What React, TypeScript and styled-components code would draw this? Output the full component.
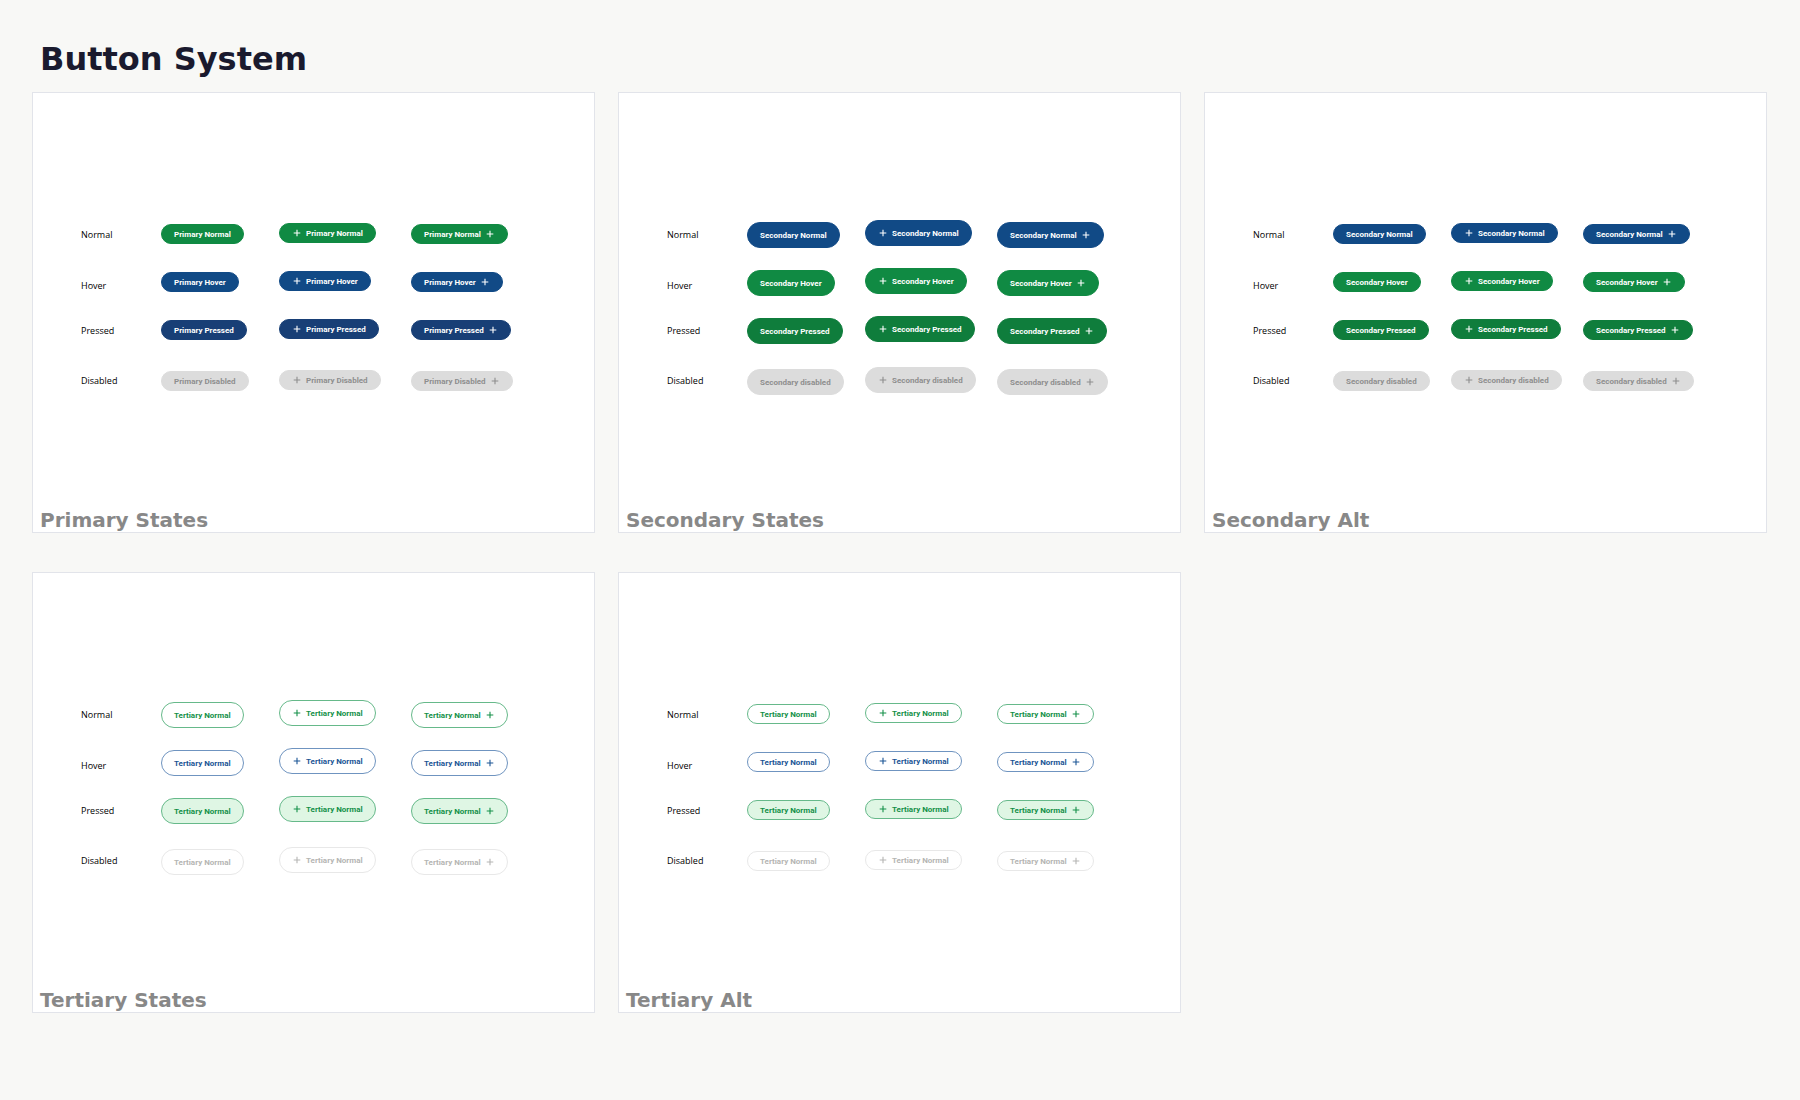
import React from "react";
import styled, { createGlobalStyle, css } from "styled-components";

type StateName = "Normal" | "Hover" | "Pressed" | "Disabled";
type Kind = "primary" | "secondary" | "tertiary";
type Size = "small" | "large";
type IconSide = "none" | "left" | "right";

interface Item {
  state: StateName;
  label: string;
}

interface Sheet {
  title: string;
  kind: Kind;
  size: Size;
}

const STATES: StateName[] = ["Normal", "Hover", "Pressed", "Disabled"];
const SIDES: IconSide[] = ["none", "left", "right"];

const ITEMS: Record<Kind, Item[]> = {
  primary: STATES.map((state) => ({ state, label: `Primary ${state}` })),
  secondary: [
    { state: "Normal", label: "Secondary Normal" },
    { state: "Hover", label: "Secondary Hover" },
    { state: "Pressed", label: "Secondary Pressed" },
    { state: "Disabled", label: "Secondary disabled" },
  ],
  tertiary: STATES.map((state) => ({ state, label: "Tertiary Normal" })),
};

const SHEETS: Sheet[] = [
  { title: "Primary States", kind: "primary", size: "small" },
  { title: "Secondary States", kind: "secondary", size: "large" },
  { title: "Secondary Alt", kind: "secondary", size: "small" },
  { title: "Tertiary States", kind: "tertiary", size: "large" },
  { title: "Tertiary Alt", kind: "tertiary", size: "small" },
];

interface Paint {
  fill: string;
  text: string;
  border: string;
}

const solid = (fill: string, text = "#ffffff"): Paint => ({ fill, text, border: fill });

const PAINTS: Record<Kind, Record<StateName, Paint>> = {
  primary: {
    Normal: solid("#108a43"),
    Hover: solid("#114a86"),
    Pressed: solid("#183f76"),
    Disabled: solid("#dcdcdc", "#8e8e8e"),
  },
  secondary: {
    Normal: solid("#114a86"),
    Hover: solid("#108a43"),
    Pressed: solid("#0f7d3c"),
    Disabled: solid("#dcdcdc", "#8e8e8e"),
  },
  tertiary: {
    Normal: { fill: "#ffffff", text: "#149049", border: "#66b98a" },
    Hover: { fill: "#ffffff", text: "#1b5595", border: "#6f94c0" },
    Pressed: { fill: "#dff6e4", text: "#149049", border: "#66b98a" },
    Disabled: { fill: "#ffffff", text: "#b5b5b3", border: "#e8e8e8" },
  },
};

const GlobalStyle = createGlobalStyle`
  *, *::before, *::after { box-sizing: border-box; }
  body {
    margin: 0;
    background: #f8f8f6;
    font-family: "Open Sans", sans-serif;
  }
`;

const Page = styled.main`
  padding: 40px 33px 40px 32px;
`;

const Title = styled.h1`
  margin: 0 0 14px;
  padding-left: 8px;
  font: 700 32px/38px "DejaVu Sans", sans-serif;
  color: #1a1a2e;
`;

const Cards = styled.div`
  display: grid;
  grid-template-columns: repeat(3, minmax(0, 1fr));
  gap: 39px 23px;
`;

const Card = styled.section`
  display: flex;
  flex-direction: column;
  background: #ffffff;
  border: 1px solid #e2e4ea;
`;

const Board = styled.div`
  display: grid;
  grid-template-columns: 80px 118px 132px auto;
  align-items: start;
  min-height: 415px;
  padding: 127px 0 0 48px;
`;

const StateList = styled.div`
  display: grid;
  grid-template-rows: 51px 45px 50px 14px;
  padding-top: 8px;
`;

const StateLabel = styled.span`
  font-size: 9px;
  line-height: 14px;
  color: #000000;
`;

const columnTop = { small: { plain: 4, lead: 3 }, large: { plain: 2, lead: 0 } };

const ButtonColumn = styled.div<{ $size: Size; $lead: boolean }>`
  display: grid;
  grid-template-rows: 48px 48px 51px auto;
  align-items: start;
  justify-items: start;
  padding-top: ${({ $size, $lead }) => columnTop[$size][$lead ? "lead" : "plain"]}px;
`;

const PillButton = styled.button<{ $paint: Paint; $size: Size }>`
  display: inline-flex;
  align-items: center;
  gap: 4px;
  height: ${({ $size }) => ($size === "large" ? 26 : 20)}px;
  padding: 0 12px;
  border-radius: 13px;
  font: 700 8px/12px Roboto, "Open Sans", sans-serif;
  white-space: nowrap;
  cursor: pointer;
  ${({ $paint }) => css`
    color: ${$paint.text};
    background: ${$paint.fill};
    border: 1px solid ${$paint.border};
  `}

  &:disabled {
    cursor: default;
  }
`;

const PillText = styled.span`
  padding-top: 1px;
`;

const PlusSvg = styled.svg`
  flex: none;
  width: 10px;
  height: 10px;
  fill: none;
  stroke: currentColor;
`;

const Caption = styled.h2`
  margin: 0;
  padding-left: 7px;
  font: 700 20px/24px "DejaVu Sans", sans-serif;
  color: #888888;
`;

const PlusIcon = () => (
  <PlusSvg viewBox="0 0 10 10" aria-hidden="true">
    <path d="M5 1.7v6.6M1.7 5h6.6" strokeWidth="1.1" />
  </PlusSvg>
);

const Pill = ({ item, kind, size, side }: { item: Item; kind: Kind; size: Size; side: IconSide }) => (
  <PillButton
    type="button"
    $paint={PAINTS[kind][item.state]}
    $size={size}
    disabled={item.state === "Disabled"}
  >
    {side === "left" && <PlusIcon />}
    <PillText>{item.label}</PillText>
    {side === "right" && <PlusIcon />}
  </PillButton>
);

const SheetCard = ({ title, kind, size }: Sheet) => (
  <Card>
    <Board>
      <StateList>
        {STATES.map((state) => (
          <StateLabel key={state}>{state}</StateLabel>
        ))}
      </StateList>
      {SIDES.map((side) => (
        <ButtonColumn key={side} $size={size} $lead={side === "left"}>
          {ITEMS[kind].map((item) => (
            <Pill key={item.state} item={item} kind={kind} size={size} side={side} />
          ))}
        </ButtonColumn>
      ))}
    </Board>
    <Caption>{title}</Caption>
  </Card>
);

export default function App() {
  return (
    <>
      <GlobalStyle />
      <Page>
        <Title>Button System</Title>
        <Cards>
          {SHEETS.map((sheet) => (
            <SheetCard key={sheet.title} {...sheet} />
          ))}
        </Cards>
      </Page>
    </>
  );
}
